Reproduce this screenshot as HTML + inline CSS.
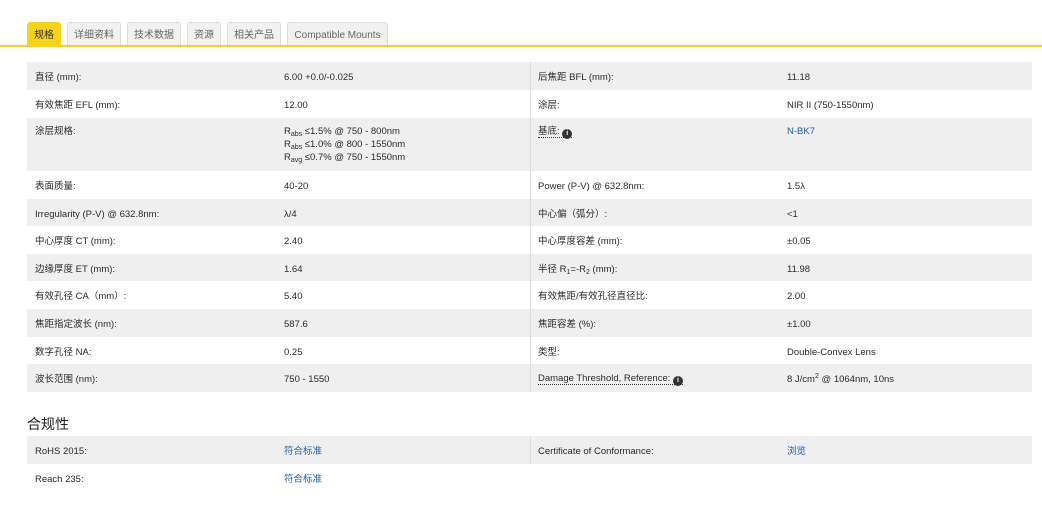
<!DOCTYPE html>
<html><head><meta charset="utf-8"><style>
body{margin:0;width:1042px;height:507px;background:#fff;font-family:"Liberation Sans","Noto Sans CJK SC",sans-serif;color:#2a2a2a;font-size:9.5px;position:relative;overflow:hidden}
.tab{position:absolute;top:22px;height:23px;line-height:25px;background:#f1f1f1;border:1px solid #ddd;border-bottom:none;border-radius:3px 3px 0 0;color:#666;font-size:10px;text-align:center;box-sizing:border-box}
.tab.a{background:#f6d21a;border-color:#f6d21a;color:#333}
.line{position:absolute;top:45px;left:0;width:1042px;height:2px;background:#f6d21a}
.r{position:absolute;left:27px;width:1005px}
.g{background:#efefef}
.r>span{position:absolute;top:2px}
.c1{left:8px}.c2{left:257px}.c3{left:511px}.c4{left:760px}
.d{position:absolute;left:503px;top:0;bottom:0;width:1px;background:#ddd}
a{color:#1f5fa8;text-decoration:none}
.u{border-bottom:1px dotted #333}
.i{display:inline-block;width:10px;height:10px;border-radius:50%;background:#333;color:#fff;font-size:7px;line-height:10px;text-align:center;font-weight:bold;vertical-align:-1px}
sub{font-size:7px;vertical-align:baseline;position:relative;top:2px;line-height:0}
sup{font-size:7px;vertical-align:baseline;position:relative;top:-4px;line-height:0}
h3{position:absolute;left:27px;top:414px;margin:0;font-size:14px;font-weight:normal;color:#222}
</style></head><body>
<div class="tab a" style="left:27px;width:34px">规格</div>
<div class="tab" style="left:67px;width:54px">详细资料</div>
<div class="tab" style="left:127px;width:54px">技术数据</div>
<div class="tab" style="left:187px;width:34px">资源</div>
<div class="tab" style="left:227px;width:54px">相关产品</div>
<div class="tab" style="left:287px;width:101px">Compatible Mounts</div>
<div class="line"></div>

<div class="r g" style="top:62px;height:28px;line-height:28px"><div class="d"></div><span class="c1">直径 (mm):</span><span class="c2">6.00 +0.0/-0.025</span><span class="c3">后焦距 BFL (mm):</span><span class="c4">11.18</span></div>
<div class="r" style="top:90px;height:28px;line-height:28px"><div class="d"></div><span class="c1">有效焦距 EFL (mm):</span><span class="c2">12.00</span><span class="c3">涂层:</span><span class="c4">NIR II (750-1550nm)</span></div>
<div class="r g" style="top:118px;height:53px;line-height:13px"><div class="d"></div><span class="c1" style="top:7px">涂层规格:</span><span class="c2" style="top:7px">R<sub>abs</sub> ≤1.5% @ 750 - 800nm<br>R<sub>abs</sub> ≤1.0% @ 800 - 1550nm<br>R<sub>avg</sub> ≤0.7% @ 750 - 1550nm</span><span class="c3" style="top:7px"><span class="u">基底: <span class="i">i</span></span></span><span class="c4" style="top:7px"><a>N-BK7</a></span></div>
<div class="r" style="top:171px;height:28px;line-height:28px"><div class="d"></div><span class="c1">表面质量:</span><span class="c2">40-20</span><span class="c3">Power (P-V) @ 632.8nm:</span><span class="c4">1.5λ</span></div>
<div class="r g" style="top:199px;height:27px;line-height:27px"><div class="d"></div><span class="c1">Irregularity (P-V) @ 632.8nm:</span><span class="c2">λ/4</span><span class="c3">中心偏（弧分）:</span><span class="c4">&lt;1</span></div>
<div class="r" style="top:226px;height:28px;line-height:28px"><div class="d"></div><span class="c1">中心厚度 CT (mm):</span><span class="c2">2.40</span><span class="c3">中心厚度容差 (mm):</span><span class="c4">±0.05</span></div>
<div class="r g" style="top:254px;height:27px;line-height:27px"><div class="d"></div><span class="c1">边缘厚度 ET (mm):</span><span class="c2">1.64</span><span class="c3">半径 R<sub>1</sub>=-R<sub>2</sub> (mm):</span><span class="c4">11.98</span></div>
<div class="r" style="top:281px;height:28px;line-height:28px"><div class="d"></div><span class="c1">有效孔径 CA（mm）:</span><span class="c2">5.40</span><span class="c3">有效焦距/有效孔径直径比:</span><span class="c4">2.00</span></div>
<div class="r g" style="top:309px;height:28px;line-height:28px"><div class="d"></div><span class="c1">焦距指定波长 (nm):</span><span class="c2">587.6</span><span class="c3">焦距容差 (%):</span><span class="c4">±1.00</span></div>
<div class="r" style="top:337px;height:27px;line-height:27px"><div class="d"></div><span class="c1">数字孔径 NA:</span><span class="c2">0.25</span><span class="c3">类型:</span><span class="c4">Double-Convex Lens</span></div>
<div class="r g" style="top:364px;height:28px;line-height:28px"><div class="d"></div><span class="c1">波长范围 (nm):</span><span class="c2">750 - 1550</span><span class="c3" style="top:8px;line-height:13px"><span class="u">Damage Threshold, Reference: <span class="i">i</span></span></span><span class="c4">8 J/cm<sup>2</sup> @ 1064nm, 10ns</span></div>

<h3>合规性</h3>
<div class="r g" style="top:436px;height:28px;line-height:28px"><div class="d"></div><span class="c1">RoHS 2015:</span><span class="c2"><a>符合标准</a></span><span class="c3">Certificate of Conformance:</span><span class="c4"><a>浏览</a></span></div>
<div class="r" style="top:464px;height:28px;line-height:28px"><span class="c1">Reach 235:</span><span class="c2"><a>符合标准</a></span></div>
</body></html>
